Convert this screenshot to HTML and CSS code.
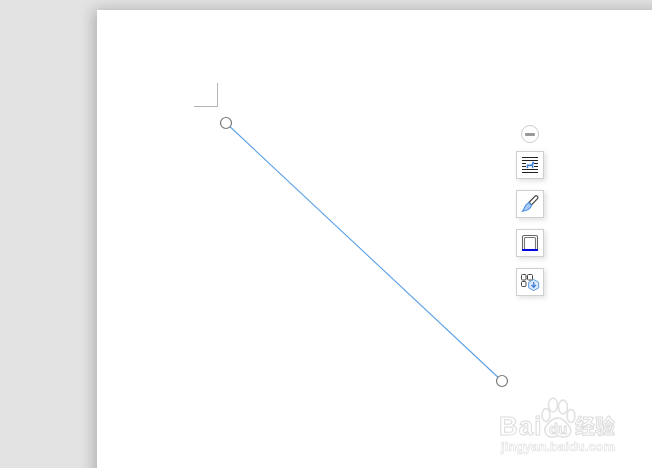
FILE: index.html
```html
<!DOCTYPE html>
<html lang="en">
<head>
    <meta charset="UTF-8">
    <meta name="viewport" content="width=device-width, initial-scale=1.0">
    <title>Document line</title>
    <link rel="stylesheet" href="styles.css">
</head>
<body>

    <div class="workspace">
        <div class="page">
            <div class="cropMark"></div>

            <!-- selected line with its two handles -->
            <svg class="lineShape" width="300" height="280" viewBox="0 0 300 280">
                <line x1="12" y1="12" x2="288" y2="270" stroke="#5aa0e6" stroke-width="1.100"/>
                <circle cx="12" cy="12" r="5.500" fill="#fff" stroke="#777" stroke-width="1.200"/>
                <circle cx="288" cy="270" r="5.500" fill="#fff" stroke="#777" stroke-width="1.200"/>
            </svg>

            <div class="sideTools">
                <div class="collapseBtn"><span></span></div>

                <button class="toolBtn">
                    <svg class="toolIcon" width="18" height="18" viewBox="0 0 18 18">
                        <path d="M1 1.500h16M1 4.500h16M1 7.500h4M13 7.500h4M1 10.500h4M13 10.500h4M1 13.500h16M1 16.500h16" stroke="#222" stroke-width="1" fill="none"/>
                        <path d="M5.700 12.200V8.600h4.800l1-2.900h1.500l.2 1.300-.9 1V12.200h-1.300V10.200H7.200v2z" fill="#3f7fd6"/>
                    </svg>
                </button>

                <button class="toolBtn">
                    <svg class="toolIcon" width="20" height="20" viewBox="0 0 20 20">
                        <path d="M9 8.500L14.800 2.300a1.700 1.700 0 0 1 2.700 2.300L11.500 11z" fill="#fff" stroke="#444" stroke-width="1.200"/>
                        <path d="M8.800 8.700l2.800 2.500c-1 3.300-4.700 5.800-9.100 6 1.500-1.300 1.700-3.300 2.600-5 .8-1.600 2.200-2.900 3.700-3.500z" fill="#a9cbf3" stroke="#4a90e8" stroke-width="1.100"/>
                    </svg>
                </button>

                <button class="toolBtn">
                    <svg class="toolIcon" width="18" height="18" viewBox="0 0 18 18">
                        <path d="M1.500 15V3a1.500 1.500 0 0 1 1.500-1.500h12a1.500 1.500 0 0 1 1.500 1.500V15" fill="none" stroke="#666" stroke-width="1.100"/>
                        <path d="M3.500 15V4.500a1 1 0 0 1 1-1h9a1 1 0 0 1 1 1V15" fill="none" stroke="#777" stroke-width="1.100"/>
                        <rect x="1" y="15" width="16" height="2" fill="#0000e0"/>
                    </svg>
                </button>

                <button class="toolBtn">
                    <svg class="toolIcon" width="20" height="20" viewBox="0 0 20 20">
                        <g fill="none" stroke="#444" stroke-width="1">
                            <rect x="1.500" y="2.500" width="4.500" height="5.500" rx="1"/>
                            <rect x="7.500" y="2.500" width="5" height="5.500" rx="1"/>
                            <rect x="1.500" y="9.500" width="4.500" height="5" rx="1"/>
                        </g>
                        <path d="M13.700 7.500l5 2.800v5.500l-5 2.800-5-2.800v-5.500z" fill="#dbe9fb" stroke="#5b9be0" stroke-width="1"/>
                        <path d="M13.700 10v5.300M11.500 13l2.200 2.400 2.200-2.400" fill="none" stroke="#3f7fd6" stroke-width="1.300"/>
                    </svg>
                </button>
            </div>
        </div>

        <div class="watermark">
            <div class="wmTop">
                <span class="wmBai">Bai</span>
                <span class="wmPaw">
                    <svg width="36" height="42" viewBox="0 0 36 42">
                        <g fill="#fff" stroke="#e0e0e0" stroke-width="1.500">
                            <ellipse cx="5" cy="18" rx="4" ry="6.500"/>
                            <ellipse cx="12" cy="8" rx="4.500" ry="7"/>
                            <ellipse cx="22" cy="10" rx="4.500" ry="7"/>
                            <ellipse cx="30" cy="19" rx="4" ry="6.500"/>
                            <path d="M17 21c5 0 8 4 11 8 4 5 1 11-5 11-2.500 0-4-1-6-1s-3.500 1-6 1c-6 0-9-6-6-11 3-4 7-8 12-8z"/>
                        </g>
                    </svg>
                    <span class="wmDu">du</span>
                </span>
                <span class="wmCn">经验</span>
            </div>
            <div class="wmUrl">jingyan.baidu.com</div>
        </div>
    </div>

</body>
</html>
```

FILE: styles.css
```css
html, body {
    margin: 0;
    padding: 0;
    height: 100%;
    overflow: hidden;
}

body {
    font-family: 'Liberation Sans', Arial, sans-serif;
    background-color: #e3e3e3;
}

.workspace {
    position: relative;
    width: 652px;
    height: 468px;
    overflow: hidden;
    padding: 10px 0 0 97px;
    box-sizing: border-box;
}

.page {
    position: relative;
    width: 600px;
    height: 520px;
    background-color: #fff;
    box-shadow: -3px 0 14px rgba(0, 0, 0, 0.24);
}

.cropMark {
    position: absolute;
    left: 97px;
    top: 73px;
    width: 23px;
    height: 23px;
    border-right: 1px solid #b5b5b5;
    border-bottom: 1px solid #b5b5b5;
}

.lineShape {
    position: absolute;
    left: 117px;
    top: 101px;
}

.sideTools {
    position: absolute;
    left: 419px;
    top: 115px;
    display: flex;
    flex-direction: column;
    align-items: center;
    gap: 11px;
}

.collapseBtn {
    width: 18px;
    height: 18px;
    box-sizing: border-box;
    border: 1.500px solid #cdcdcd;
    border-radius: 50%;
    background-color: #fff;
    display: flex;
    align-items: center;
    justify-content: center;
    margin-bottom: -3px;
}

.collapseBtn span {
    width: 10px;
    height: 3px;
    background-color: #999;
    border-radius: 1px;
}

.toolBtn {
    width: 28px;
    height: 28px;
    padding: 0;
    background-color: #fff;
    border: 1px solid #cfcfcf;
    box-shadow: 2px 2px 5px rgba(0, 0, 0, 0.12);
    display: flex;
    align-items: center;
    justify-content: center;
}

.toolIcon {
    filter: blur(0.25px);
}

.watermark {
    position: absolute;
    left: 499px;
    top: 397px;
    width: 125px;
    color: #fff;
    -webkit-text-stroke: 1px #dcdcdc;
    filter: blur(0.4px);
}

.wmTop {
    display: flex;
    align-items: flex-start;
    height: 42px;
}

.wmBai {
    width: 42px;
    margin-top: 16px;
    font-size: 26px;
    font-weight: bold;
    line-height: 26px;
    letter-spacing: 1px;
}

.wmPaw {
    position: relative;
    width: 34px;
    height: 42px;
}

.wmDu {
    position: absolute;
    left: 8px;
    top: 24px;
    font-size: 15px;
    font-weight: bold;
    line-height: 15px;
}

.wmCn {
    margin-top: 17px;
    font-family: 'Noto Sans CJK SC', sans-serif;
    font-size: 20px;
    line-height: 24px;
    font-weight: bold;
}

.wmUrl {
    margin: -1px 0 0 2px;
    font-size: 13px;
    line-height: 18px;
    font-weight: bold;
    white-space: nowrap;
    -webkit-text-stroke: 0.6px #dedede;
}
```
